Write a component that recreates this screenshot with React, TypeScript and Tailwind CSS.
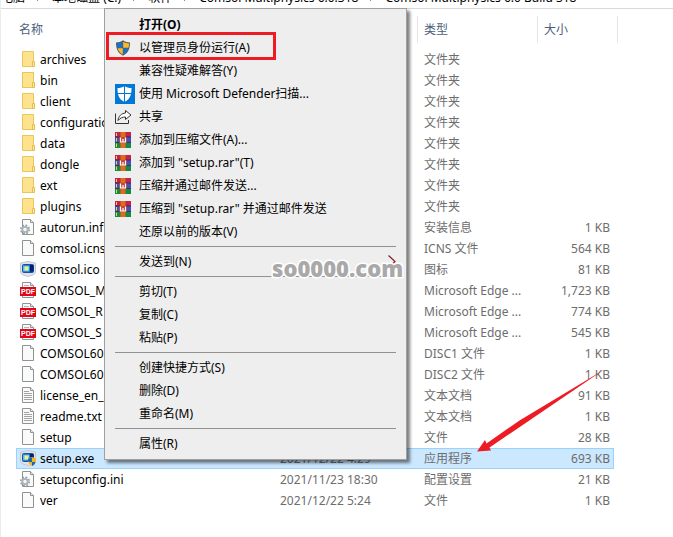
import type { ReactNode } from "react";

type FileKind = "folder" | "config" | "blank" | "text" | "pdf" | "comsol" | "setup";

interface FileRow {
  name: string;
  kind: FileKind;
  type: string;
  date?: string;
  size?: string;
}

const path = ["电脑", "本地磁盘 (C:)", "软件", "Comsol Multiphysics 6.0.318", "Comsol Multiphysics 6.0 Build 318"];

const files: FileRow[] = [
  { name: "archives", kind: "folder", type: "文件夹" },
  { name: "bin", kind: "folder", type: "文件夹" },
  { name: "client", kind: "folder", type: "文件夹" },
  { name: "configuration", kind: "folder", type: "文件夹" },
  { name: "data", kind: "folder", type: "文件夹" },
  { name: "dongle", kind: "folder", type: "文件夹" },
  { name: "ext", kind: "folder", type: "文件夹" },
  { name: "plugins", kind: "folder", type: "文件夹" },
  { name: "autorun.inf", kind: "config", type: "安装信息", size: "1 KB" },
  { name: "comsol.icns", kind: "blank", type: "ICNS 文件", size: "564 KB" },
  { name: "comsol.ico", kind: "comsol", type: "图标", size: "81 KB" },
  { name: "COMSOL_M", kind: "pdf", type: "Microsoft Edge ...", size: "1,723 KB" },
  { name: "COMSOL_R", kind: "pdf", type: "Microsoft Edge ...", size: "774 KB" },
  { name: "COMSOL_S", kind: "pdf", type: "Microsoft Edge ...", size: "545 KB" },
  { name: "COMSOL60", kind: "blank", type: "DISC1 文件", size: "1 KB" },
  { name: "COMSOL60", kind: "blank", type: "DISC2 文件", size: "1 KB" },
  { name: "license_en_", kind: "text", type: "文本文档", size: "91 KB" },
  { name: "readme.txt", kind: "text", type: "文本文档", size: "1 KB" },
  { name: "setup", kind: "blank", type: "文件", size: "28 KB" },
  { name: "setup.exe", kind: "setup", type: "应用程序", date: "2021/12/22 4:29", size: "693 KB" },
  { name: "setupconfig.ini", kind: "config", type: "配置设置", date: "2021/11/23 18:30", size: "21 KB" },
  { name: "ver", kind: "blank", type: "文件", date: "2021/12/22 5:24", size: "1 KB" },
];

const SELECTED = "setup.exe";

interface MenuEntry {
  label: string;
  icon?: ReactNode;
  bold?: boolean;
  marked?: boolean;
  submenu?: boolean;
}

const menuGroups: MenuEntry[][] = [
  [
    { label: "打开(O)", bold: true },
    { label: "以管理员身份运行(A)", icon: <ShieldIcon />, marked: true },
    { label: "兼容性疑难解答(Y)" },
    { label: "使用 Microsoft Defender扫描...", icon: <DefenderIcon /> },
    { label: "共享", icon: <ShareIcon /> },
    { label: "添加到压缩文件(A)...", icon: <RarIcon /> },
    { label: '添加到 "setup.rar"(T)', icon: <RarIcon /> },
    { label: "压缩并通过邮件发送...", icon: <RarIcon /> },
    { label: '压缩到 "setup.rar" 并通过邮件发送', icon: <RarIcon /> },
    { label: "还原以前的版本(V)" },
  ],
  [{ label: "发送到(N)", submenu: true }],
  [{ label: "剪切(T)" }, { label: "复制(C)" }, { label: "粘贴(P)" }],
  [{ label: "创建快捷方式(S)" }, { label: "删除(D)" }, { label: "重命名(M)" }],
  [{ label: "属性(R)" }],
];

export default function App() {
  return (
    <div className="relative min-h-screen overflow-hidden border-l border-[#ececec] bg-white font-['Noto_Sans','Noto_Sans_CJK_SC',sans-serif] text-xs text-black">
      <AddressBar />
      <FileTable />
      <ContextMenu />
      <Watermark />
      <PointerArrow />
    </div>
  );
}

function AddressBar() {
  return (
    <nav className="flex h-[9px] items-end overflow-hidden border-b border-[#d9d9d9] pb-0.5 whitespace-nowrap">
      <ol className="flex leading-4">
        {path.map((part, i) => (
          <li key={part} className="flex items-center">
            {i > 0 && (
              <svg className="mx-[11px]" width="5" height="8" viewBox="0 0 5 8" fill="none">
                <path d="M1 1l3 3-3 3" stroke="#8a8a8a" />
              </svg>
            )}
            {part}
          </li>
        ))}
      </ol>
    </nav>
  );
}

function FileTable() {
  return (
    <div className="pt-[7px] pr-[55px] pl-[15px]">
      <table className="w-full table-fixed border-separate border-spacing-0 text-left">
        <colgroup>
          <col />
          <col className="w-[145px]" />
          <col className="w-[120px]" />
          <col className="w-[77px]" />
          <col className="w-1" />
        </colgroup>
        <thead>
          <tr className="h-[27px] text-[#4c607a]">
            <th className="p-0 pl-[3px] font-normal">名称</th>
            <th className="p-0" />
            <th className="border-l border-[#e5e5e5] p-0 pl-1.5 font-normal">类型</th>
            <th className="border-l border-[#e5e5e5] p-0 pl-1.5 font-normal">大小</th>
            <th className="border-r border-[#e5e5e5] p-0" />
          </tr>
        </thead>
        <tbody>
          <tr className="h-1.5">
            <td colSpan={5} className="p-0" />
          </tr>
          {files.map((file, i) => (
            <Row key={i} file={file} selected={file.name === SELECTED} />
          ))}
        </tbody>
      </table>
    </div>
  );
}

function Row({ file, selected }: { file: FileRow; selected: boolean }) {
  const cell = selected
    ? "border-y border-[#99d1ff] bg-[#cce8ff] p-0 align-top"
    : "border-y border-transparent p-0 align-top";
  return (
    <tr className="h-[21px] leading-[19px] whitespace-nowrap text-[#6d6d6d]" aria-selected={selected}>
      <td className={`${cell} ${selected ? "border-l" : ""}`}>
        <span className={`flex items-start gap-1 pt-px leading-[18px] text-black ${selected ? "pl-[3px]" : "pl-1"}`}>
          <FileIcon kind={file.kind} />
          {file.name}
        </span>
      </td>
      <td className={`${cell} pl-2`}>{file.date}</td>
      <td className={`${cell} pl-[7px]`}>{file.type}</td>
      <td className={`${cell} text-right ${selected ? "border-r pr-[3px]" : "pr-1"}`}>{file.size}</td>
      <td className="p-0" />
    </tr>
  );
}

function ContextMenu() {
  return (
    <div
      role="menu"
      className="absolute top-2 left-[103px] w-[303px] border border-[#a0a0a0] bg-[#eeeeee] py-1 shadow-[3px_3px_3px_rgba(0,0,0,0.5)]"
    >
      {menuGroups.map((group, i) => (
        <div key={i} role="group">
          {i > 0 && <hr className="mx-2.5 my-[3px] border-t border-[#919191]" />}
          {group.map((entry) => (
            <MenuItem key={entry.label} entry={entry} />
          ))}
        </div>
      ))}
    </div>
  );
}

function MenuItem({ entry }: { entry: MenuEntry }) {
  return (
    <button
      role="menuitem"
      className={`relative flex h-[23px] w-full items-center px-2.5 text-left whitespace-nowrap ${entry.bold ? "font-bold" : ""}`}
    >
      <span className="mr-1 flex w-5 shrink-0">{entry.icon}</span>
      {entry.label}
      {entry.submenu && (
        <svg className="ml-auto" width="8" height="13" viewBox="0 0 8 13" fill="none">
          <path d="M.5.5 7 6.500l-6 6" stroke="#8b1a2b" strokeWidth="1.200" />
        </svg>
      )}
      {entry.marked && <span className="absolute -top-1 left-px h-7 w-[170px] border-3 border-[#ed1c24]" />}
    </button>
  );
}

function Watermark() {
  return (
    <div className="absolute top-[254px] left-[271px] font-['Open_Sans',sans-serif] text-[22px] leading-7 font-extrabold text-[#a9a9a9] [paint-order:stroke_fill] [-webkit-text-stroke:3px_white]">
      so0000.com
    </div>
  );
}

function PointerArrow() {
  return (
    <svg className="absolute top-[369px] left-[476px]" width="128" height="84" viewBox="0 0 128 84">
      <path d="M126.500 1 12.500 78.500l1.500 3L0 82.500 8 71l1.500 3.500 33-23Z" fill="#ed1c24" />
    </svg>
  );
}

function FileIcon({ kind }: { kind: FileKind }) {
  if (kind === "folder") {
    return (
      <svg width="16" height="16" viewBox="0 0 16 16" className="shrink-0">
        <path d="M2.500.5h11v15h-11Z" fill="#ffe28e" stroke="#e9c65b" />
        <path d="M12.500 10.500h2v5h-2Z" fill="#ffe9a6" stroke="#e3bd4d" />
      </svg>
    );
  }
  if (kind === "comsol" || kind === "setup") {
    return (
      <svg width="16" height="16" viewBox="0 0 16 16" className="shrink-0">
        <path d="M.5 2 8 .5 15.500 2v9c0 2.500-3.500 3.500-7.500 4.500C4 14.500.5 13.500.5 11Z" fill="#e1e3e6" stroke="#c3c7cc" />
        <rect x="2" y="3" width="12" height="9" rx="2" fill="#1450b8" />
        <path d="M10 4h3.500v6.500H10Z" fill="#06206f" />
        <path d="M3 4.500h6.500v6H3Z" fill="#4fc0e6" />
        <path d="M4.500 5.500h4v4h-4Z" fill="#eef08a" />
        {kind === "setup" && (
          <>
            <path d="M8 8.500 12 7l4 1.500c0 4-1 6-4 7.500-3-1.500-4-3.500-4-7.500Z" fill="#f5b51d" />
            <path d="M12 7.500V12H8.500C8.200 11 8 10 8 8.800Z" fill="#1665b8" />
            <path d="M12 12h3.500c-.5 2-1.500 3-3.500 4Z" fill="#1665b8" />
          </>
        )}
      </svg>
    );
  }
  return (
    <svg width="16" height="16" viewBox="0 0 16 16" className="shrink-0">
      <path d="M2.500.5h8l3 3v12h-11Z" fill="#f9fafa" stroke="#929292" />
      <path d="M10.500.5v3h3" fill="#e6e6e6" stroke="#929292" />
      {kind === "text" && <path d="M4 4.500h5M4 6.500h8M4 8.500h8M4 10.500h8M4 12.500h8" stroke="#a3a3a3" />}
      {kind === "config" && (
        <>
          <circle cx="5" cy="10.500" r="4.200" fill="none" stroke="#8f999f" strokeWidth="1.600" strokeDasharray="1.800 1.500" />
          <circle cx="5" cy="10.500" r="2.700" fill="#f4f6f7" stroke="#a9b2b8" strokeWidth="1.800" />
        </>
      )}
      {kind === "pdf" && (
        <>
          <path d="M4 3.500h5" stroke="#b5b5b5" />
          <rect y="5" width="16" height="9" fill="#e2061b" />
          <text x="8" y="12" textAnchor="middle" fontSize="7" fontWeight="700" fill="#fff" fontFamily="Liberation Sans, sans-serif">
            PDF
          </text>
        </>
      )}
    </svg>
  );
}

function ShieldIcon() {
  return (
    <svg width="16" height="16" viewBox="0 0 16 16">
      <path d="M8 .3C6 2 3.500 2.500 1 2.500c0 6 1.500 10.500 7 13.200 5.500-2.700 7-7.200 7-13.200-2.500 0-5-.5-7-2.200Z" fill="#555d63" />
      <path d="M7.800 1.800v6H2.500C2.100 6.500 2 5 2 3.500c2-.1 4-.5 5.800-1.700Z" fill="#1671c9" />
      <path d="M8.200 1.800C10 3 12 3.400 14 3.500c0 1.500-.1 3-.5 4.300H8.200Z" fill="#fdb827" />
      <path d="M2.700 8.200h5.100v6.200c-2.800-1.500-4.400-3.500-5.100-6.200Z" fill="#fdb827" />
      <path d="M8.200 8.200h5.100c-.7 2.700-2.300 4.700-5.100 6.200Z" fill="#1671c9" />
    </svg>
  );
}

function DefenderIcon() {
  return (
    <svg width="20" height="20" viewBox="0 0 20 20">
      <path d="M0 0h20v20H0Z" fill="#0078d7" />
      <path d="M9.500 2c-2 1.500-4.500 2-7 2 0 6.500 1 11 7 14 6-3 7-7.500 7-14-2.500 0-5-.5-7-2Z" fill="#fff" />
      <path d="M9.500 1v18M2 9.500h16" stroke="#0078d7" />
    </svg>
  );
}

function ShareIcon() {
  return (
    <svg width="17" height="16" viewBox="0 0 17 16" fill="none" stroke="#333">
      <path d="M.5 4.500v10h13V11" />
      <path d="M10.500 1.500 16 6l-5.500 4.500V8C7.500 8 5 9 3 11.500 3.500 7 6.500 4.300 10.500 4Z" fill="#fff" />
    </svg>
  );
}

function RarIcon() {
  return (
    <svg width="16" height="16" viewBox="0 0 16 16">
      <path d="M0 0h16v5H0Z" fill="#c2234c" />
      <path d="M0 5h16v5.500H0Z" fill="#4650ba" />
      <path d="M0 10.500h16V16H0Z" fill="#168a45" />
      <path d="M0 5h16M0 10.500h16" stroke="#2a2348" strokeWidth=".8" />
      <path d="M1.500 1v3M1.500 6v3.500M1.500 11.500v3.500" stroke="#e9d44b" />
      <path d="M5.500 0h5v16h-5Z" fill="#e36a17" />
      <path d="M4.500 5h7v6h-7Z" fill="#c94335" />
      <path d="M5.500 5.500v4.500h5V5.500M8 7v3" fill="none" stroke="#fff" strokeWidth="1.200" />
    </svg>
  );
}
